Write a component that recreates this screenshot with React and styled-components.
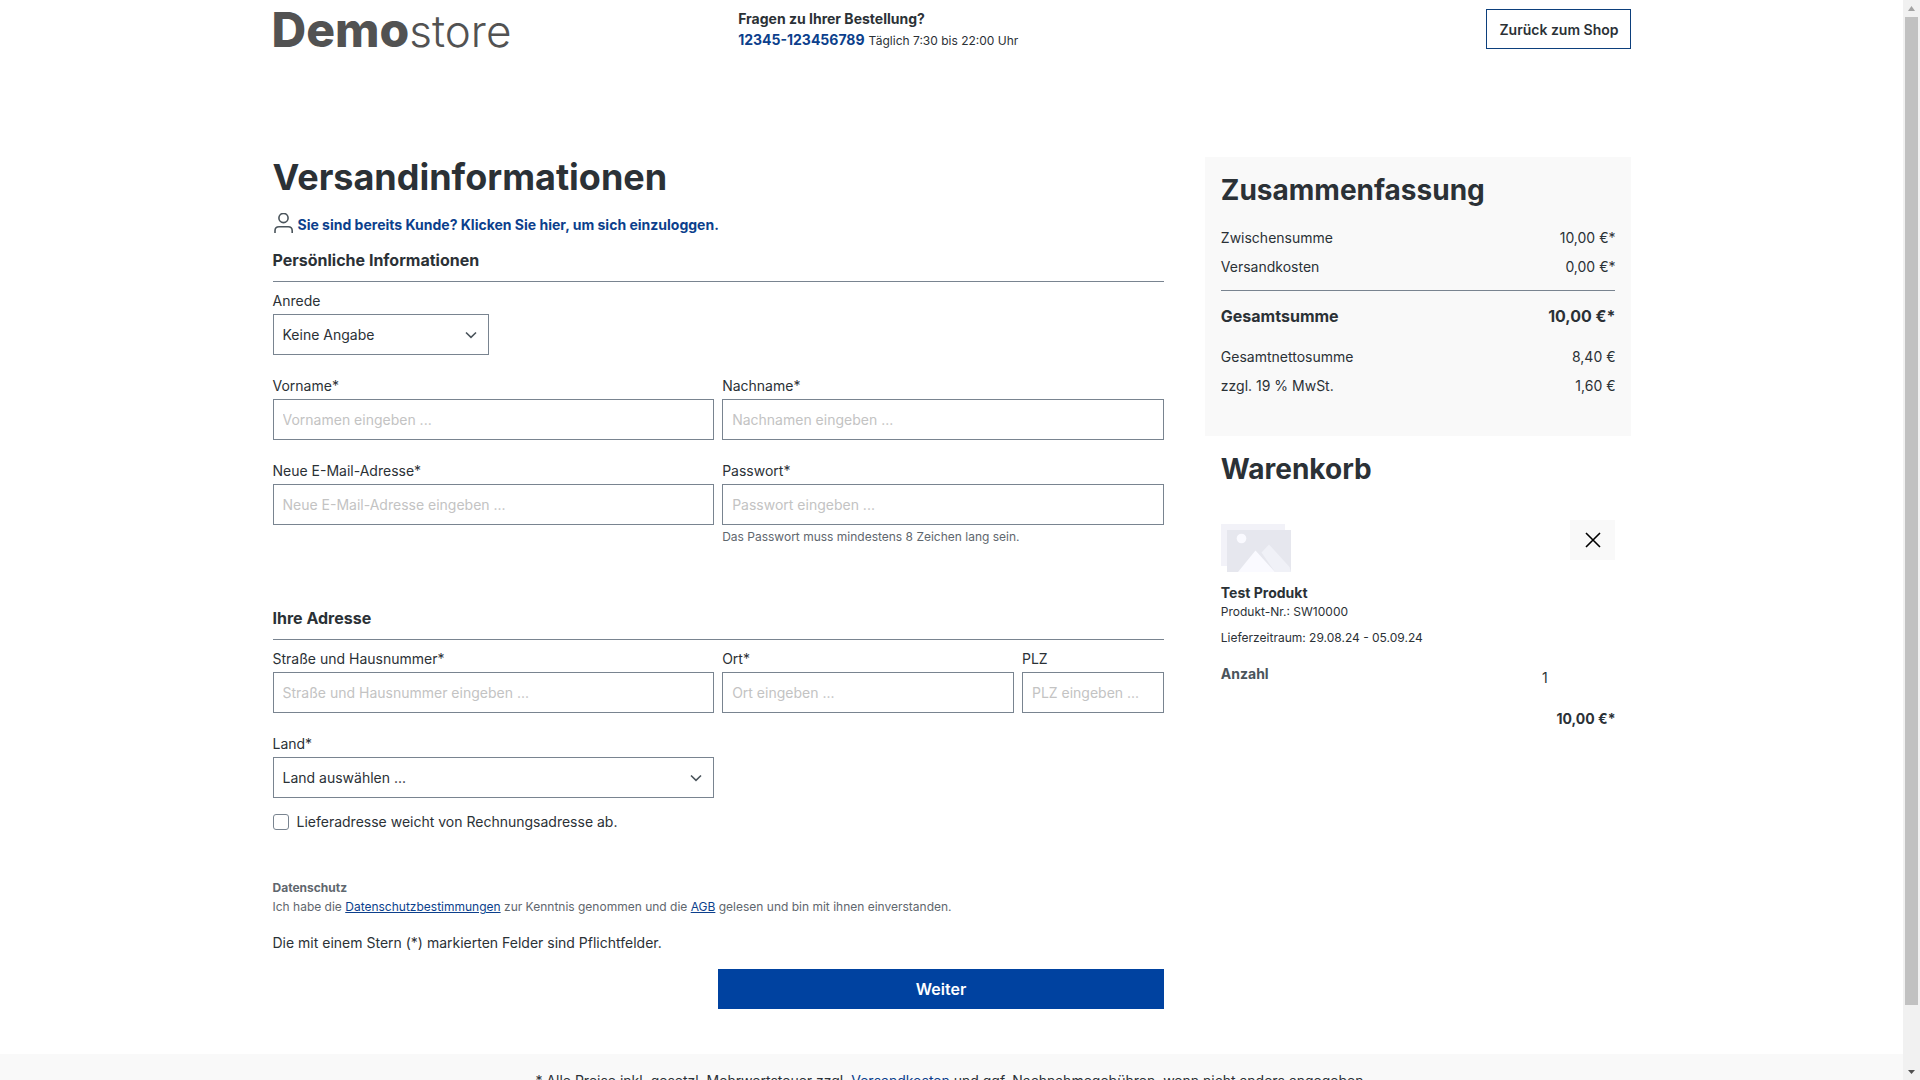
import { useState } from "react";
import styled, { createGlobalStyle } from "styled-components";

const GlobalStyle = createGlobalStyle`
  * {
    box-sizing: border-box;
  }

  body {
    margin: 0;
    background: #ffffff;
    color: #2b3136;
    font-family: Inter, "Liberation Sans", sans-serif;
    font-size: 14px;
    line-height: 21px;
  }

  h1, h2, h3, p, dl, dd {
    margin: 0;
  }

  input, select, button {
    font: inherit;
    color: inherit;
  }
`;

const Window = styled.div`
  display: flex;
  height: 100vh;
`;

const Page = styled.div`
  flex: 1;
  min-width: 0;
  overflow-y: auto;
  scrollbar-width: none;
`;

const Container = styled.div`
  max-width: 1400px;
  margin: 0 auto;
  padding: 0 20px;
`;

const Grid = styled(Container)`
  display: grid;
  grid-template-columns: repeat(12, minmax(0, 1fr));
  column-gap: 40px;
  align-items: start;
`;

const Header = styled(Grid)`
  padding-top: 8px;
  padding-bottom: 104px;
`;

const Logo = styled.a`
  grid-column: span 4;
  color: #525252;
  font-size: 44px;
  font-weight: 300;
  line-height: 43px;
  text-decoration: none;

  b {
    font-size: 48px;
    font-weight: 800;
  }
`;

const Contact = styled.div`
  grid-column: span 4;
`;

const ContactTitle = styled.div`
  font-weight: 700;
`;

const Small = styled.span`
  font-size: 12px;
`;

const StrongLink = styled.a`
  color: #0c3f8c;
  font-weight: 700;
  text-decoration: none;
`;

const BackButton = styled.button`
  grid-column: span 4;
  justify-self: end;
  height: 40px;
  margin-top: 1px;
  padding: 0 12px;
  background: #ffffff;
  border: 1px solid #0c3f7c;
  font-weight: 600;
  cursor: pointer;
`;

const Main = styled.form`
  grid-column: span 8;
  padding: 0 1px;
`;

const Aside = styled.aside`
  grid-column: span 4;
`;

const Title = styled.h1`
  font-size: 36px;
  font-weight: 700;
  line-height: 40px;
`;

const LoginRow = styled.div`
  display: flex;
  align-items: center;
  gap: 3px;
  height: 24px;
  margin: 15px 0 12px;
`;

const SectionTitle = styled.h2`
  margin-bottom: 8px;
  padding-bottom: 9px;
  border-bottom: 1px solid #798490;
  font-size: 16px;
  font-weight: 700;
  line-height: 24px;
`;

const Fields = styled.div`
  display: grid;
  grid-template-columns: repeat(12, minmax(0, 1fr));
  gap: 20px 8px;
  margin-bottom: ${({ $space }) => $space}px;
`;

const Field = styled.div`
  grid-column: span ${({ $span }) => $span};
`;

const Label = styled.label`
  display: block;
  margin-bottom: 3px;
`;

const Input = styled.input`
  display: block;
  width: 100%;
  height: 41px;
  padding: 0 9px;
  background: #ffffff;
  border: 1px solid #798490;
  border-radius: 0;

  &::placeholder {
    color: #c3c3c3;
    opacity: 1;
  }
`;

const SelectBox = styled.div`
  display: grid;
  align-items: center;

  select, svg {
    grid-area: 1 / 1;
  }

  svg {
    justify-self: end;
    margin-right: 11px;
    pointer-events: none;
  }
`;

const Select = styled.select`
  width: 100%;
  height: 41px;
  padding: 0 36px 0 9px;
  appearance: none;
  background: #ffffff;
  border: 1px solid #798490;
  border-radius: 0;
`;

const Hint = styled.p`
  margin-top: 3px;
  color: #5f676e;
  font-size: 12px;
  line-height: 18px;
`;

const CheckRow = styled.div`
  display: flex;
  align-items: center;
  gap: 8px;
  margin-bottom: 46px;
`;

const Checkbox = styled.input`
  width: 16px;
  height: 16px;
  margin: 0;
  appearance: none;
  background: #ffffff;
  border: 1px solid #798490;
  border-radius: 3px;

  &:checked {
    background: #0042a0;
  }
`;

const Privacy = styled.div`
  color: #5f676e;
  font-size: 12px;
  line-height: 19px;

  h3 {
    font-size: 12px;
    font-weight: 700;
  }

  a {
    color: #0c3f8c;
  }
`;

const Required = styled.p`
  margin: 16px 0;
`;

const SubmitButton = styled.button`
  display: block;
  width: 50%;
  height: 40px;
  margin-left: auto;
  background: #0042a0;
  border: none;
  color: #ffffff;
  font-size: 16px;
  font-weight: 600;
  cursor: pointer;
`;

const Footer = styled.footer`
  margin-top: 45px;
  padding: 16px 20px;
  background: #f9f9f9;
  text-align: center;

  a {
    color: #0c3f8c;
    text-decoration: none;
  }
`;

const Summary = styled.section`
  padding: 16px 16px 36px;
  background: #f9f9f9;
`;

const AsideTitle = styled.h2`
  margin-bottom: 16px;
  font-size: 28px;
  font-weight: 700;
  line-height: 34px;
`;

const SummaryRow = styled.dl`
  display: flex;
  justify-content: space-between;
  padding: 4px 0;
`;

const TotalRow = styled(SummaryRow)`
  margin: 9px 0 14px;
  padding: 13px 0 0;
  border-top: 1px solid #798490;
  font-size: 16px;
  font-weight: 700;
  line-height: 24px;
`;

const Cart = styled.section`
  padding: 16px;
`;

const CartTop = styled.div`
  display: flex;
  justify-content: space-between;
  align-items: flex-start;
  margin: 34px 0 11px;
`;

const Thumb = styled.svg`
  margin-top: 4px;
`;

const RemoveButton = styled.button`
  display: flex;
  align-items: center;
  justify-content: center;
  width: 45px;
  height: 40px;
  padding: 0;
  background: #f9f9f9;
  border: none;
  cursor: pointer;
`;

const ProductName = styled.h3`
  font-size: 14px;
  font-weight: 700;
  line-height: 20px;
`;

const ProductInfo = styled.p`
  margin-bottom: 8px;
  font-size: 12px;
  line-height: 18px;
`;

const Quantity = styled.div`
  display: grid;
  grid-template-columns: 2fr 1fr;
  margin: 17px 0 20px;
  line-height: 20px;

  b {
    color: #4a545b;
    font-weight: 700;
  }

  span {
    padding: 4px 0 0 58px;
  }
`;

const Price = styled.p`
  font-weight: 700;
  text-align: right;
`;

const ScrollBar = styled.div`
  display: flex;
  flex-direction: column;
  align-items: center;
  width: 17px;
  background: #f1f1f1;
`;

const ScrollThumb = styled.div`
  flex: 1;
  width: 13px;
  margin-bottom: 58px;
  background: #c1c1c1;
`;

const Chevron = () => (
  <svg width="14" height="14" viewBox="0 0 14 14" fill="none" aria-hidden="true">
    <path d="M2 4.5 7 9.3l5-4.8" stroke="#4a545b" strokeWidth="1.6" />
  </svg>
);

const ArrowIcon = ({ d, fill }) => (
  <svg width="17" height="17" viewBox="0 0 17 17" aria-hidden="true">
    <path d={d} fill={fill} />
  </svg>
);

const UserIcon = () => (
  <svg width="22" height="22" viewBox="0 0 22 22" fill="none" stroke="#4a545b" strokeWidth="1.6" aria-hidden="true">
    <circle cx="10.5" cy="5" r="4.6" />
    <path d="M2 20v-2.200c0-2.400 1.600-4 4-4h9.200c2.400 0 4 1.600 4 4V20" />
  </svg>
);

const ProductImage = () => (
  <Thumb width="70" height="48" viewBox="0 0 70 48" role="img" aria-label="Test Produkt">
    <path fill="#f2f2f8" d="M0 0h64v42H0z" />
    <path fill="#e6e7ee" d="M6 6h64v42H6z" />
    <circle cx="20.5" cy="14.5" r="4.8" fill="#fafaff" />
    <path fill="#f0f1f7" d="M40.500 28.500 48 20.500 68.500 43 70 48H54z" />
    <path fill="#fafaff" d="M17 48 34.500 26.500 54 48z" />
  </Thumb>
);

const TextField = ({ id, label, span, type = "text", placeholder, children }) => (
  <Field $span={span}>
    <Label htmlFor={id}>{label}</Label>
    <Input id={id} name={id} type={type} placeholder={placeholder} />
    {children}
  </Field>
);

const SumLine = ({ name, value }) => (
  <SummaryRow>
    <dt>{name}</dt>
    <dd>{value}</dd>
  </SummaryRow>
);

const App = () => {
  const [differentAddress, setDifferentAddress] = useState(false);

  return (
    <Window>
      <GlobalStyle />
      <Page>
        <Header as="header">
          <Logo href="#"><b>Demo</b>store</Logo>
          <Contact>
            <ContactTitle>Fragen zu Ihrer Bestellung?</ContactTitle>
            <StrongLink href="tel:12345123456789">12345-123456789</StrongLink>{" "}
            <Small>Täglich 7:30 bis 22:00 Uhr</Small>
          </Contact>
          <BackButton type="button">Zurück zum Shop</BackButton>
        </Header>

        <Grid>
          <Main onSubmit={(e) => e.preventDefault()}>
            <Title>Versandinformationen</Title>
            <LoginRow>
              <UserIcon />
              <StrongLink href="#">Sie sind bereits Kunde? Klicken Sie hier, um sich einzuloggen.</StrongLink>
            </LoginRow>

            <SectionTitle>Persönliche Informationen</SectionTitle>
            <Fields $space={60}>
              <Field $span={3}>
                <Label htmlFor="salutation">Anrede</Label>
                <SelectBox>
                  <Select id="salutation" name="salutation">
                    <option>Keine Angabe</option>
                    <option>Frau</option>
                    <option>Herr</option>
                  </Select>
                  <Chevron />
                </SelectBox>
              </Field>
              <Field $span={9} />
              <TextField id="firstName" label="Vorname*" span={6} placeholder="Vornamen eingeben ..." />
              <TextField id="lastName" label="Nachname*" span={6} placeholder="Nachnamen eingeben ..." />
              <TextField id="email" label="Neue E-Mail-Adresse*" span={6} type="email" placeholder="Neue E-Mail-Adresse eingeben ..." />
              <TextField id="password" label="Passwort*" span={6} type="password" placeholder="Passwort eingeben ...">
                <Hint>Das Passwort muss mindestens 8 Zeichen lang sein.</Hint>
              </TextField>
            </Fields>

            <SectionTitle>Ihre Adresse</SectionTitle>
            <Fields $space={13}>
              <TextField id="street" label="Straße und Hausnummer*" span={6} placeholder="Straße und Hausnummer eingeben ..." />
              <TextField id="city" label="Ort*" span={4} placeholder="Ort eingeben ..." />
              <TextField id="zip" label="PLZ" span={2} placeholder="PLZ eingeben ..." />
              <Field $span={6}>
                <Label htmlFor="country">Land*</Label>
                <SelectBox>
                  <Select id="country" name="country">
                    <option>Land auswählen ...</option>
                    <option>Deutschland</option>
                  </Select>
                  <Chevron />
                </SelectBox>
              </Field>
            </Fields>
            <CheckRow>
              <Checkbox
                type="checkbox"
                id="differentAddress"
                checked={differentAddress}
                onChange={(e) => setDifferentAddress(e.target.checked)}
              />
              <label htmlFor="differentAddress">Lieferadresse weicht von Rechnungsadresse ab.</label>
            </CheckRow>

            <Privacy>
              <h3>Datenschutz</h3>
              <p>
                Ich habe die <a href="#">Datenschutzbestimmungen</a> zur Kenntnis genommen und die{" "}
                <a href="#">AGB</a> gelesen und bin mit ihnen einverstanden.
              </p>
            </Privacy>
            <Required>Die mit einem Stern (*) markierten Felder sind Pflichtfelder.</Required>
            <SubmitButton type="submit">Weiter</SubmitButton>
          </Main>

          <Aside>
            <Summary>
              <AsideTitle>Zusammenfassung</AsideTitle>
              <SumLine name="Zwischensumme" value="10,00 €*" />
              <SumLine name="Versandkosten" value="0,00 €*" />
              <TotalRow>
                <dt>Gesamtsumme</dt>
                <dd>10,00 €*</dd>
              </TotalRow>
              <SumLine name="Gesamtnettosumme" value="8,40 €" />
              <SumLine name="zzgl. 19 % MwSt." value="1,60 €" />
            </Summary>
            <Cart>
              <AsideTitle>Warenkorb</AsideTitle>
              <CartTop>
                <ProductImage />
                <RemoveButton type="button" aria-label="Entfernen">
                  <svg width="16" height="16" viewBox="0 0 16 16" aria-hidden="true">
                    <path d="m1 1 14 14M15 1 1 15" stroke="#000000" strokeWidth="1.6" />
                  </svg>
                </RemoveButton>
              </CartTop>
              <ProductName>Test Produkt</ProductName>
              <ProductInfo>Produkt-Nr.: SW10000</ProductInfo>
              <ProductInfo>Lieferzeitraum: 29.08.24 - 05.09.24</ProductInfo>
              <Quantity>
                <b>Anzahl</b>
                <span>1</span>
              </Quantity>
              <Price>10,00 €*</Price>
            </Cart>
          </Aside>
        </Grid>

        <Footer>
          * Alle Preise inkl. gesetzl. Mehrwertsteuer zzgl. <a href="#">Versandkosten</a> und ggf.
          Nachnahmegebühren, wenn nicht anders angegeben.
        </Footer>
      </Page>
      <ScrollBar aria-hidden="true">
        <ArrowIcon d="M8.500 6 12 11H5z" fill="#a3a3a3" />
        <ScrollThumb />
        <ArrowIcon d="M5 7h7l-3.500 4z" fill="#505050" />
      </ScrollBar>
    </Window>
  );
};

export default App;
